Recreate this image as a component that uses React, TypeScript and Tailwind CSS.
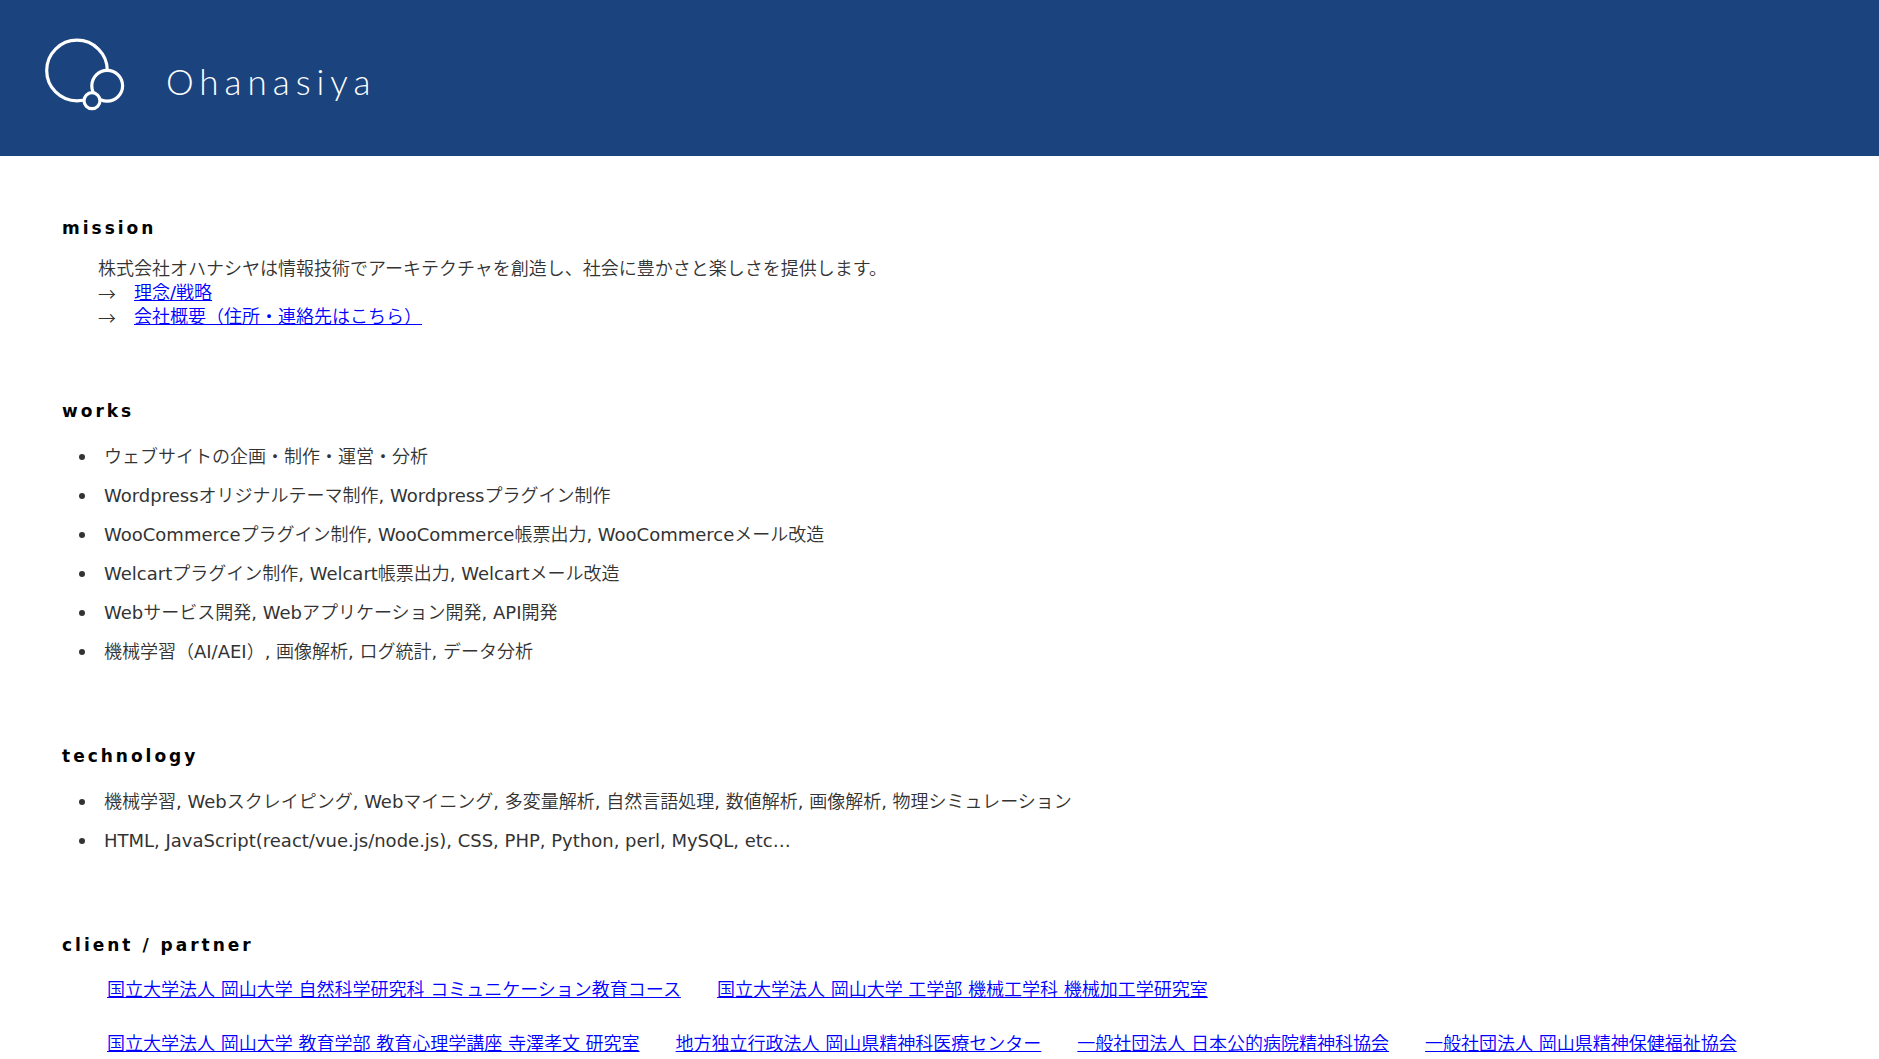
import type { ReactNode } from "react";

const works = [
  "ウェブサイトの企画・制作・運営・分析",
  "Wordpressオリジナルテーマ制作, Wordpressプラグイン制作",
  "WooCommerceプラグイン制作, WooCommerce帳票出力, WooCommerceメール改造",
  "Welcartプラグイン制作, Welcart帳票出力, Welcartメール改造",
  "Webサービス開発, Webアプリケーション開発, API開発",
  "機械学習（AI/AEI）, 画像解析, ログ統計, データ分析",
];

const technology = [
  "機械学習, Webスクレイピング, Webマイニング, 多変量解析, 自然言語処理, 数値解析, 画像解析, 物理シミュレーション",
  "HTML, JavaScript(react/vue.js/node.js), CSS, PHP, Python, perl, MySQL, etc…",
];

const clients = [
  "国立大学法人 岡山大学 自然科学研究科 コミュニケーション教育コース",
  "国立大学法人 岡山大学 工学部 機械工学科 機械加工学研究室",
  "国立大学法人 岡山大学 教育学部 教育心理学講座 寺澤孝文 研究室",
  "地方独立行政法人 岡山県精神科医療センター",
  "一般社団法人 日本公的病院精神科協会",
  "一般社団法人 岡山県精神保健福祉協会",
];

const missionLinks = ["理念/戦略", "会社概要（住所・連絡先はこちら）"];

function Logo() {
  return (
    <svg viewBox="0 0 84 80" className="h-20 w-[84px]" fill="#1b447e" stroke="#fff" strokeWidth="3.2" aria-hidden="true">
      <circle cx="35" cy="32.5" r="30.3" />
      <circle cx="65.2" cy="47.7" r="15.4" />
      <circle cx="50" cy="62.7" r="8" />
    </svg>
  );
}

function Section({ title, children }: { title: string; children: ReactNode }) {
  return (
    <section>
      <h2 className="text-[17px] leading-6 font-bold tracking-[3px] text-black">{title}</h2>
      {children}
    </section>
  );
}

function Bullets({ items }: { items: string[] }) {
  return (
    <ul className="mt-[22px] flex list-none flex-col gap-[15px] pl-[17px]">
      {items.map((item) => (
        <li key={item} className="flex items-center gap-[19px]">
          <span className="size-[6px] shrink-0 rounded-full bg-[#333]" />
          <span>{item}</span>
        </li>
      ))}
    </ul>
  );
}

function Link({ children }: { children: ReactNode }) {
  return (
    <a href="#" className="text-[#0000ff] underline">
      {children}
    </a>
  );
}

export default function App() {
  return (
    <div lang="ja" className="bg-white font-['DejaVu_Sans','Noto_Sans_CJK_JP_DemiLight','Noto_Sans_CJK_JP',sans-serif] text-[18px] leading-6 text-[#333]">
      <header className="flex h-[156px] items-center bg-[#1b447e] px-[42px]">
        <Logo />
        <h1 className="mt-[6px] ml-10 font-['Lato',sans-serif] text-[35px] leading-10 font-light tracking-[6px] text-white">
          Ohanasiya
        </h1>
      </header>
      <main className="flex flex-col px-[62px] pt-[60px] pb-10">
        <Section title="mission">
          <div className="mt-[17px] px-9">
            <p>株式会社オハナシヤは情報技術でアーキテクチャを創造し、社会に豊かさと楽しさを提供します。</p>
            {missionLinks.map((label) => (
              <p key={label} className="flex gap-[18px]">
                <span className="font-['Noto_Sans_CJK_JP_DemiLight','Noto_Sans_CJK_JP',sans-serif]">→</span>
                <Link>{label}</Link>
              </p>
            ))}
          </div>
        </Section>
        <div className="mt-[70px]">
          <Section title="works">
            <Bullets items={works} />
          </Section>
        </div>
        <div className="mt-20">
          <Section title="technology">
            <Bullets items={technology} />
          </Section>
        </div>
        <div className="mt-20">
          <Section title="client / partner">
            <div className="mt-[21px] flex flex-wrap gap-x-9 gap-y-[30px] px-[45px]">
              {clients.map((name) => (
                <Link key={name}>{name}</Link>
              ))}
            </div>
          </Section>
        </div>
      </main>
    </div>
  );
}
